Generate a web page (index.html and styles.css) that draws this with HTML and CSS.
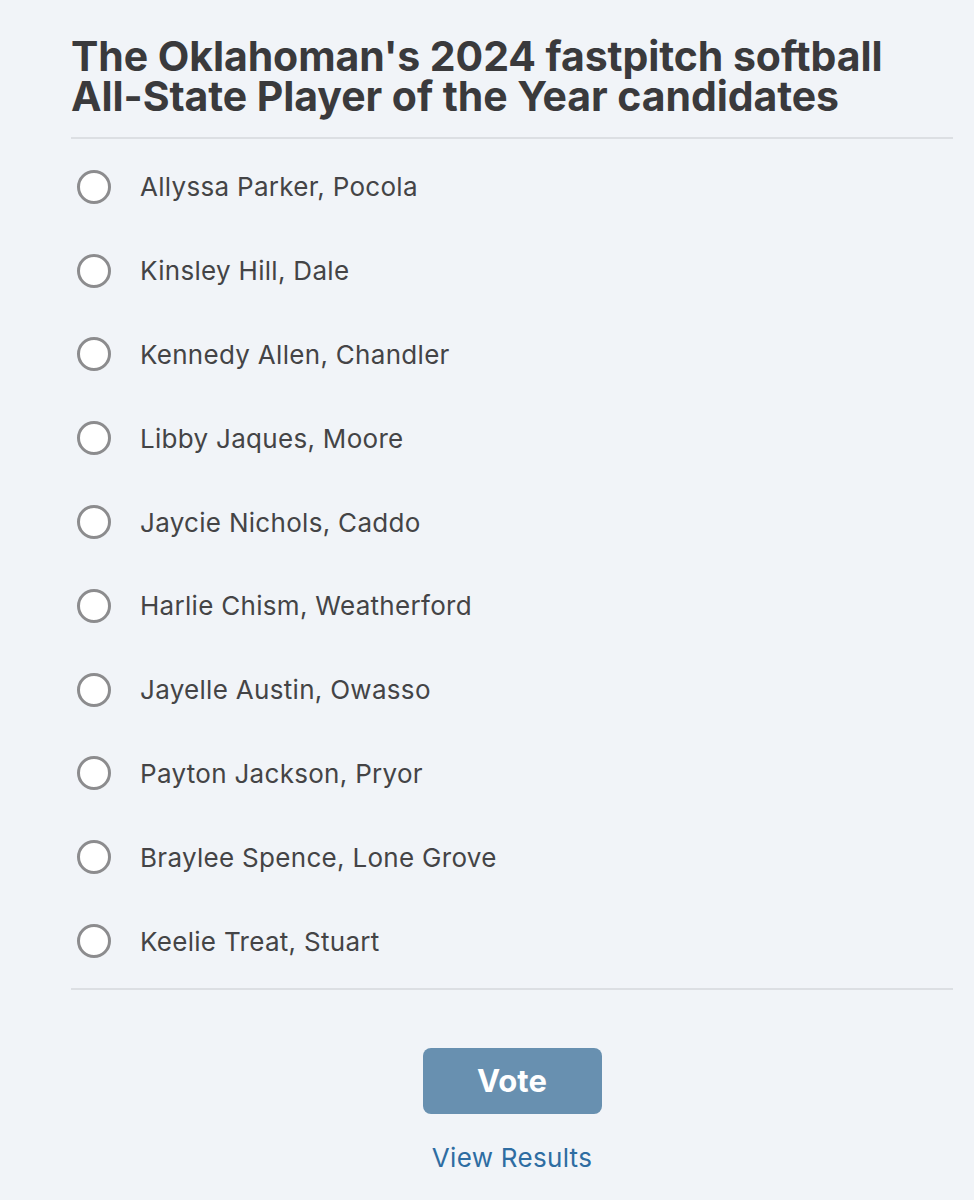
FILE: index.html
```html
<!DOCTYPE html>
<html lang="en">
<head>
<meta charset="utf-8">
<title>Poll</title>
<link rel="stylesheet" href="styles.css">
</head>
<body>
<main class="poll">
  <h1 class="poll-title">The Oklahoman's 2024 fastpitch softball <span class="nowrap">All-State</span> Player of the Year candidates</h1>
  <ul class="options">
    <li class="option"><span class="radio"></span><span class="label">Allyssa Parker, Pocola</span></li>
    <li class="option"><span class="radio"></span><span class="label">Kinsley Hill, Dale</span></li>
    <li class="option"><span class="radio"></span><span class="label">Kennedy Allen, Chandler</span></li>
    <li class="option"><span class="radio"></span><span class="label">Libby Jaques, Moore</span></li>
    <li class="option"><span class="radio"></span><span class="label">Jaycie Nichols, Caddo</span></li>
    <li class="option"><span class="radio"></span><span class="label">Harlie Chism, Weatherford</span></li>
    <li class="option"><span class="radio"></span><span class="label">Jayelle Austin, Owasso</span></li>
    <li class="option"><span class="radio"></span><span class="label">Payton Jackson, Pryor</span></li>
    <li class="option"><span class="radio"></span><span class="label">Braylee Spence, Lone Grove</span></li>
    <li class="option"><span class="radio"></span><span class="label">Keelie Treat, Stuart</span></li>
  </ul>
  <div class="actions">
    <button class="vote-btn" type="button">Vote</button>
    <a class="results-link" href="#">View Results</a>
  </div>
</main>
</body>
</html>
```
FILE: styles.css
```css
html, body {
  margin: 0;
  padding: 0;
  background: #f1f4f8;
}
body {
  font-family: Inter, "Noto Sans", sans-serif;
  color: #444446;
}
.poll {
  margin-left: 71px;
  width: 882px;
  padding-top: 36px;
}
.poll-title {
  margin: 0;
  font-size: 41px;
  line-height: 40px;
  font-weight: 700;
  color: #3a3a3c;
  letter-spacing: -0.08px;
  padding-bottom: 21px;
  border-bottom: 2px solid #dcdfe3;
}
.nowrap {
  white-space: nowrap;
}
.options {
  list-style: none;
  margin: 0;
  padding: 6px 0 5px;
  border-bottom: 2px solid #dcdfe3;
}
.option {
  display: flex;
  align-items: center;
  height: 83.8px;
}
.radio {
  box-sizing: border-box;
  width: 34px;
  height: 34px;
  margin-left: 6px;
  border: 3px solid #8c8c8e;
  border-radius: 50%;
  background: #ffffff;
  flex: none;
}
.label {
  margin-left: 29px;
  font-size: 26px;
  letter-spacing: 0.3px;
  color: #444446;
}
.actions {
  display: flex;
  flex-direction: column;
  align-items: center;
  padding-top: 58px;
}
.vote-btn {
  width: 179px;
  height: 66px;
  border: none;
  border-radius: 8px;
  background: #6890b0;
  color: #ffffff;
  font-family: Inter, "Noto Sans", sans-serif;
  font-size: 31px;
  font-weight: 700;
  padding: 0;
}
.results-link {
  margin-top: 28px;
  font-size: 26px;
  letter-spacing: 0.3px;
  color: #2e6da2;
  text-decoration: none;
}
```
